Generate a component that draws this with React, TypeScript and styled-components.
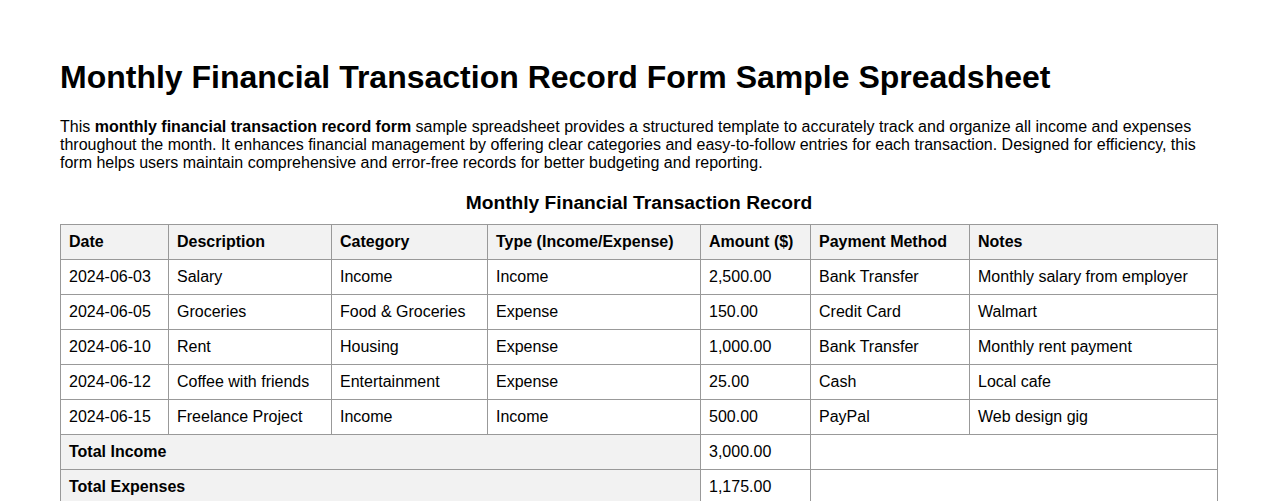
import React from "react";
import styled, { createGlobalStyle } from "styled-components";

const GlobalStyle = createGlobalStyle`
  body {
    margin: 0;
    background: #ffffff;
    font-family: "Liberation Sans", Arial, sans-serif;
    color: #000000;
  }
`;

const Page = styled.div`
  padding: 0 60px;
`;

const Title = styled.h1`
  font-size: 32px;
  font-weight: bold;
  margin: 59px 0 22px;
`;

const Intro = styled.p`
  font-size: 16px;
  margin: 0 0 20px;
`;

const Table = styled.table`
  width: 100%;
  border-collapse: collapse;
  font-size: 16px;
`;

const Caption = styled.caption`
  font-size: 19.2px;
  font-weight: bold;
  padding-bottom: 10px;
`;

const HeadCell = styled.th<{ $w?: number }>`
  border: 1px solid #999999;
  background: #f2f2f2;
  padding: 8px;
  text-align: left;
  font-weight: bold;
  ${({ $w }) => ($w ? `width: ${$w}px;` : "")}
`;

const Cell = styled.td`
  border: 1px solid #999999;
  padding: 8px;
  text-align: left;
`;

const TotalLabel = styled.td`
  border: 1px solid #999999;
  background: #f2f2f2;
  padding: 8px;
  font-weight: bold;
`;

interface IColumn {
  title: string;
  width: number;
}

const columns: IColumn[] = [
  { title: "Date", width: 91 },
  { title: "Description", width: 146 },
  { title: "Category", width: 139 },
  { title: "Type (Income/Expense)", width: 196 },
  { title: "Amount ($)", width: 93 },
  { title: "Payment Method", width: 142 },
  { title: "Notes", width: 231 },
];

const rows: string[][] = [
  ["2024-06-03", "Salary", "Income", "Income", "2,500.00", "Bank Transfer", "Monthly salary from employer"],
  ["2024-06-05", "Groceries", "Food & Groceries", "Expense", "150.00", "Credit Card", "Walmart"],
  ["2024-06-10", "Rent", "Housing", "Expense", "1,000.00", "Bank Transfer", "Monthly rent payment"],
  ["2024-06-12", "Coffee with friends", "Entertainment", "Expense", "25.00", "Cash", "Local cafe"],
  ["2024-06-15", "Freelance Project", "Income", "Income", "500.00", "PayPal", "Web design gig"],
];

const totals = [
  { label: "Total Income", value: "3,000.00" },
  { label: "Total Expenses", value: "1,175.00" },
];

const App = () => {
  return (
    <Page>
      <GlobalStyle />
      <Title>Monthly Financial Transaction Record Form Sample Spreadsheet</Title>
      <Intro>
        This <strong>monthly financial transaction record form</strong> sample spreadsheet provides a structured
        template to accurately track and organize all income and expenses throughout the month. It enhances
        financial management by offering clear categories and easy-to-follow entries for each transaction.
        Designed for efficiency, this form helps users maintain comprehensive and error-free records for better
        budgeting and reporting.
      </Intro>
      <Table>
        <Caption>Monthly Financial Transaction Record</Caption>
        <thead>
          <tr>
            {columns.map(({ title, width }) => (
              <HeadCell key={title} $w={width}>
                {title}
              </HeadCell>
            ))}
          </tr>
        </thead>
        <tbody>
          {rows.map((row) => (
            <tr key={row[0]}>
              {row.map((value, i) => (
                <Cell key={i}>{value}</Cell>
              ))}
            </tr>
          ))}
          {totals.map(({ label, value }) => (
            <tr key={label}>
              <TotalLabel colSpan={4}>{label}</TotalLabel>
              <Cell>{value}</Cell>
              <Cell colSpan={2}></Cell>
            </tr>
          ))}
        </tbody>
      </Table>
    </Page>
  );
};

export default App;
